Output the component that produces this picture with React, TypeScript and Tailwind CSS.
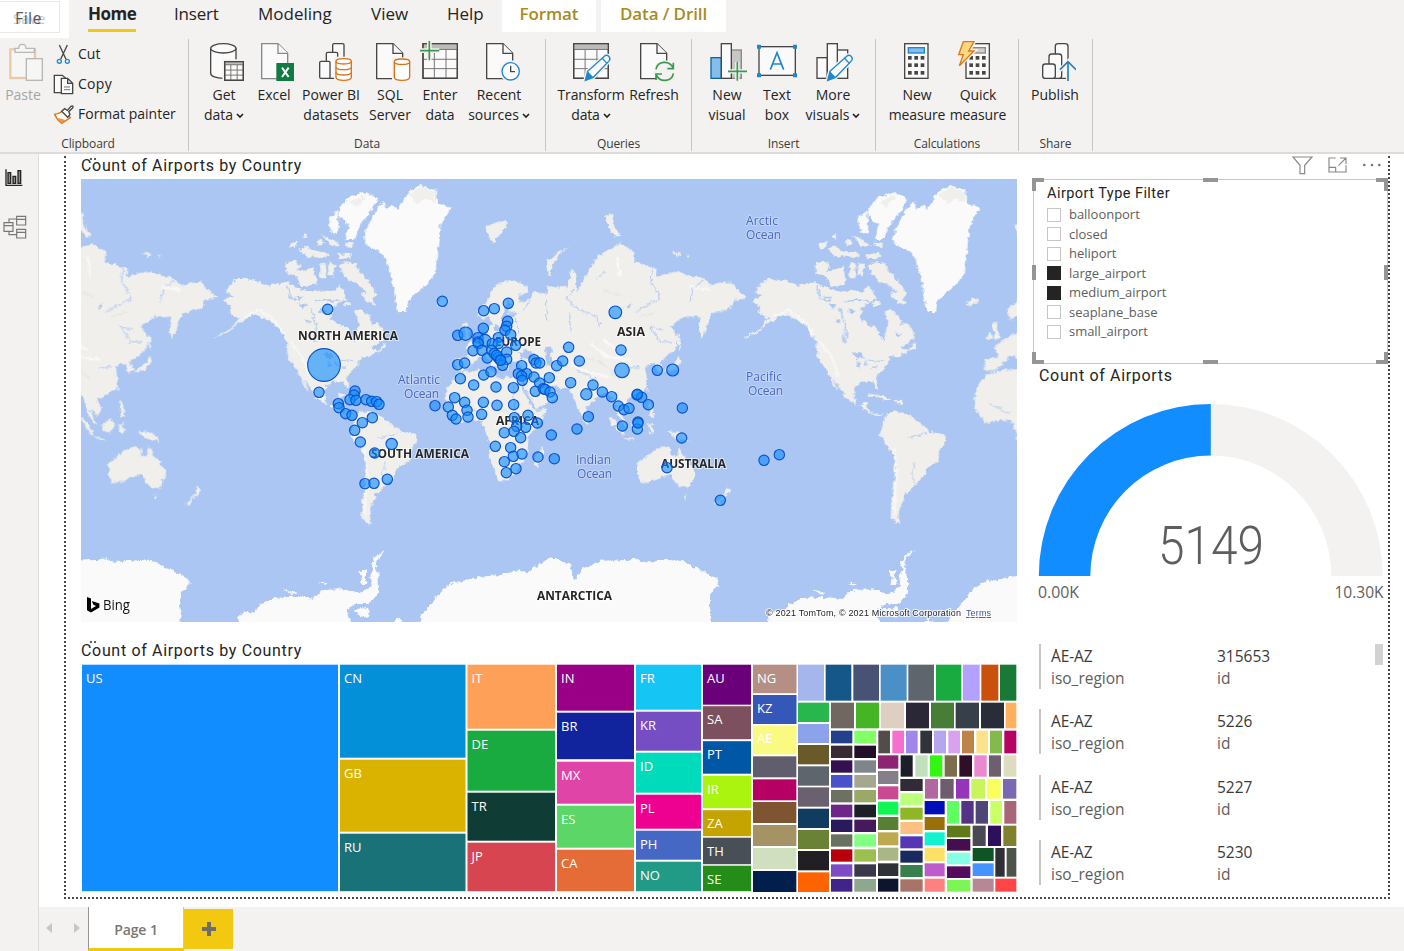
import React from "react";

const ui = "font-['Open_Sans','Noto_Sans',sans-serif]";
const din = "font-[Roboto,'Liberation_Sans',sans-serif]";

/* ---------- ribbon icons ---------- */
type IconProps = { box: string; w?: number; h?: number; children: React.ReactNode };
function Icon({ box, w = 42, h = 42, children }: IconProps) {
  return (
    <svg viewBox={box} width={w} height={h} fill="none" strokeWidth={4} className="shrink-0">
      {children}
    </svg>
  );
}

const DARK = "#484644";
const BLUE = "#1f87cc";
const GREEN = "#3c9a50";

function Doc({ x, color = DARK }: { x: number; color?: string }) {
  return (
    <g stroke={color} fill="#fafafa">
      <path d={`M${x} 131h49l29 29v76h-78z`} />
      <path d={`M${x + 49} 131v29h29`} />
    </g>
  );
}
function Grid({ x, y, w, h, color = DARK }: { x: number; y: number; w: number; h: number; color?: string }) {
  return (
    <g stroke={color}>
      <rect x={x} y={y} width={w} height={h} fill="#fafafa" />
      <rect x={x + 2} y={y + 2} width={w - 4} height={h / 7} fill="#bdbbb9" stroke="none" />
      <path
        strokeWidth={3}
        stroke="#797775"
        d={`M${x} ${y + h / 6}h${w}M${x} ${y + h * 0.45}h${w}M${x} ${y + h * 0.72}h${w}M${x + w * 0.33} ${y + h / 6}V${y + h}M${x + w * 0.67} ${y + h / 6}V${y + h}`}
      />
      <rect x={x} y={y} width={w} height={h} />
    </g>
  );
}
function Pencil({ x, y }: { x: number; y: number }) {
  return (
    <g transform={`translate(${x} ${y})`}>
      <path d="M0 76l7-27L58 3c8-6 20 4 14 14L24 67z" fill="#fafafa" stroke="#f3f2f1" strokeWidth={12} />
      <path d="M0 76l7-27L58 3c8-6 20 4 14 14L24 67z" fill="#fafafa" stroke={BLUE} />
      <path d="M0 76l7-27 17 18z" fill={BLUE} />
      <path d="M50 9l15 16" stroke={BLUE} />
    </g>
  );
}

const icons = {
  get: (
    <Icon box="609 123 126 126">
      <path d="M632 145v75c0 9 17 15 38 15s38-6 38-15v-75" fill="#fafafa" stroke={DARK} />
      <ellipse cx="670" cy="145" rx="38" ry="14" fill="#fafafa" stroke={DARK} />
      <rect x="667" y="178" width="70" height="68" fill="#f3f2f1" />
      <Grid x={674} y={185} w={56} h={56} />
    </Icon>
  ),
  excel: (
    <Icon box="759 123 126 126">
      <Doc x={785} color="#8a8886" />
      <rect x="829" y="189" width="53" height="54" fill="#107c41" />
      <path d="M846 203l20 28M866 203l-20 28" stroke="#fff" strokeWidth={6} />
    </Icon>
  ),
  pbi: (
    <Icon box="930 123 126 126">
      <g stroke={DARK} fill="#fafafa">
        <rect x="998" y="131" width="34" height="80" rx="4" />
        <rect x="979" y="157" width="34" height="78" rx="4" />
        <rect x="959" y="184" width="31" height="51" rx="4" />
      </g>
      <path d="M1002 170h60v78h-60z" fill="#f3f2f1" />
      <g stroke="#d87415" fill="#fff">
        <path d="M1008 184v48c0 5 10 9 23 9s23-4 23-9v-48" />
        <ellipse cx="1031" cy="184" rx="23" ry="8" />
        <path d="M1008 200c0 5 10 9 23 9s23-4 23-9M1008 216c0 5 10 9 23 9s23-4 23-9" />
      </g>
    </Icon>
  ),
  sql: (
    <Icon box="-3 123 126 126">
      <Doc x={20} />
      <path d="M66 172h60v76H66z" fill="#f3f2f1" />
      <g stroke="#d87415" fill="#fff">
        <path d="M73 185v46c0 6 10 10 23 10s23-4 23-10v-46" />
        <ellipse cx="96" cy="185" rx="23" ry="8" />
      </g>
    </Icon>
  ),
  enter: (
    <Icon box="147 123 126 126">
      <Grid x={159} y={131} w={103} h={104} />
      <path d="M178 123v58M150 152h58" stroke="#f3f2f1" strokeWidth={14} />
      <path d="M178 123v58M150 152h58" stroke={GREEN} strokeWidth={5} />
    </Icon>
  ),
  recent: (
    <Icon box="324 123 126 126">
      <Doc x={350} />
      <circle cx="422" cy="214" r="33" fill="#f3f2f1" />
      <circle cx="422" cy="214" r="26" fill="#fff" stroke={BLUE} />
      <path d="M422 197v18h13" stroke={DARK} />
    </Icon>
  ),
  transform: (
    <Icon box="600 123 126 126">
      <Grid x={611} y={131} w={104} h={104} />
      <Pencil x={646} y={165} />
    </Icon>
  ),
  refresh: (
    <Icon box="789 123 126 126">
      <Doc x={812} />
      <circle cx="884" cy="214" r="33" fill="#f3f2f1" />
      <g stroke={GREEN} strokeWidth={5}>
        <path d="M858 208c4-26 41-29 52-3M910 188v18h-18M910 220c-4 26-41 29-52 3M858 240v-18h18" />
      </g>
    </Icon>
  ),
  newVisual: (
    <Icon box="48 123 126 126">
      <rect x="124" y="150" width="30" height="85" fill="#c8c6c4" stroke="#8a8886" />
      <rect x="63" y="173" width="31" height="62" fill="#83beec" stroke="#1067a8" />
      <rect x="94" y="131" width="30" height="104" fill="#fafafa" stroke={DARK} />
      <path d="M142 186v56M114 214h57" stroke="#f3f2f1" strokeWidth={13} />
      <path d="M142 186v56M114 214h57" stroke={GREEN} strokeWidth={5} />
    </Icon>
  ),
  textBox: (
    <Icon box="198 123 126 126">
      <rect x="207" y="140" width="109" height="86" fill="#fafafa" stroke={DARK} />
      <path d="M201 134h12v12h-12zM309 134h12v12h-12zM201 220h12v12h-12zM309 220h12v12h-12z" fill={BLUE} />
      <path d="M241 209l20-51 20 51M248 192h26" stroke={BLUE} strokeWidth={5} />
    </Icon>
  ),
  more: (
    <Icon box="366 123 126 126">
      <g stroke={DARK} fill="#fafafa">
        <rect x="442" y="150" width="31" height="85" />
        <rect x="381" y="173" width="31" height="62" />
        <rect x="412" y="131" width="30" height="104" />
      </g>
      <Pencil x={413} y={165} />
    </Icon>
  ),
  newMeasure: (
    <Icon box="618 123 126 126">
      <rect x="644" y="131" width="70" height="104" fill="#fafafa" stroke={DARK} />
      <rect x="655" y="143" width="48" height="16" fill="#83beec" stroke={BLUE} />
      <Keys x={654} />
    </Icon>
  ),
  quick: (
    <Icon box="801 123 126 126">
      <rect x="828" y="131" width="70" height="104" fill="#fafafa" stroke={DARK} />
      <rect x="838" y="143" width="48" height="16" fill="#d2d0ce" stroke="#8a8886" />
      <Keys x={838} />
      <path d="M820 125h32l-16 28h16l-44 44 12-33h-14z" fill="#f3f2f1" stroke="#f3f2f1" strokeWidth={12} />
      <path d="M820 125h32l-16 28h16l-44 44 12-33h-14z" fill="#fbd983" stroke="#dd7a17" />
    </Icon>
  ),
  publish: (
    <Icon box="1032 123 126 126">
      <g stroke={DARK} fill="#fafafa">
        <rect x="1096" y="131" width="38" height="104" rx="8" />
        <rect x="1077" y="162" width="38" height="73" rx="8" />
        <rect x="1058" y="192" width="38" height="43" rx="8" />
      </g>
      <path d="M1134 250v-64l-24 24M1134 186l24 24" stroke="#f3f2f1" strokeWidth={13} />
      <path d="M1134 243v-57M1110 209l24-24 24 24" stroke="#2b7fb5" strokeWidth={5} />
    </Icon>
  ),
};
function Keys({ x }: { x: number }) {
  return (
    <g fill={DARK}>
      {[168, 190, 213].map((y) =>
        [0, 19, 38].map((dx) => <rect key={`${y}-${dx}`} x={x + dx} y={y} width={11} height={11} />)
      )}
    </g>
  );
}

/* ---------- ribbon ---------- */
function Chevron() {
  return (
    <svg width="8" height="6" viewBox="0 0 8 6" fill="none" stroke="#252423" strokeWidth="1.7" className="ml-[3px] inline-block align-middle">
      <path d="M1 1l3 3 3-3" />
    </svg>
  );
}
type Btn = { icon: React.ReactNode; a: string; b?: string; cls: string; menu?: boolean };
function Group({ cls, btnCls, label, btns }: { cls: string; btnCls: string; label: string; btns: Btn[] }) {
  return (
    <section className={`flex flex-col justify-between border-r border-[#c8c6c4] ${cls}`}>
      <div className={`flex pt-[2px] ${btnCls}`}>
        {btns.map((t) => (
          <button key={t.a + t.b} className={`flex shrink-0 flex-col items-center text-[14px] leading-[20px] text-[#252423] ${t.cls}`}>
            {t.icon}
            <span className="mt-[2px] whitespace-nowrap">{t.a}</span>
            <span className="whitespace-nowrap">
              {t.b}
              {t.menu && <Chevron />}
            </span>
          </button>
        ))}
      </div>
      <div className="text-center text-[12px] leading-[14px] tracking-[-0.1px] text-[#3b3a39]">{label}</div>
    </section>
  );
}

function Ribbon() {
  return (
    <div className="flex h-[122px] border-b-2 border-[#dcdbda] pt-[7px] pb-px">
      <section className="flex w-[189px] shrink-0 flex-col justify-between border-r border-[#c8c6c4]">
        <div className="flex">
          <div className="flex w-[46px] flex-col items-center pt-[2px] text-[14px] leading-[20px] text-[#a6a5a4]">
            <Icon box="6 123 126 126">
              <g opacity="0.55">
                <rect x="31" y="148" width="74" height="86" fill="#fafafa" stroke="#e3ab68" strokeWidth={7} />
                <path d="M45 157v-12h11c0-16 22-16 22 0h25v12z" fill="#fafafa" stroke="#8a8886" />
                <rect x="79" y="176" width="48" height="65" fill="#fafafa" stroke="#8a8886" />
              </g>
            </Icon>
            <span className="mt-[2px]">Paste</span>
          </div>
          <div className="flex flex-col gap-[6px] pl-[7px] pt-[3px] text-[14px] leading-6 text-[#252423]">
            <div className="flex items-center gap-[4px]">
              <Icon box="158 132 63 63" w={21} h={21}>
                <path d="M177 135l20 43M201 135l-20 43" stroke={DARK} />
                <circle cx="177" cy="184" r="6" stroke={BLUE} />
                <circle cx="201" cy="184" r="6" stroke={BLUE} />
              </Icon>
              <span>Cut</span>
            </div>
            <div className="flex items-center gap-[4px]">
              <Icon box="158 221 63 63" w={21} h={21}>
                <path d="M182 277h-20v-52h24l10 9" fill="#fafafa" stroke={DARK} />
                <path d="M183 234h19l15 15v31h-34zM202 234v15h15" fill="#fafafa" stroke={DARK} />
                <path d="M191 260h18M191 268h18" stroke="#797775" strokeWidth={3} />
              </Icon>
              <span className="tracking-[0.3px]">Copy</span>
            </div>
            <div className="flex items-center gap-[4px]">
              <Icon box="158 309 63 63" w={21} h={21}>
                <path d="M163 340c12-2 19-5 24-11l23 21-26 17c-8-6-16-14-21-27z" fill="#fff" stroke="#d87415" />
                <path d="M172 350l26 8-13 9z" fill="#f0953f" />
                <path d="M184 331l9-8 8 5 11-12c6-4 8 1 4 6l-11 10 4 8-7 9z" fill="#fff" stroke={DARK} />
              </Icon>
              <span>Format painter</span>
            </div>
          </div>
        </div>
        <div className="pr-3 text-center text-[12px] leading-[14px] tracking-[-0.1px] text-[#3b3a39]">Clipboard</div>
      </section>
      <Group
        cls="w-[357px]"
        btnCls="pl-[10px]"
        label="Data"
        btns={[
          { icon: icons.get, a: "Get", b: "data", menu: true, cls: "w-[50px]" },
          { icon: icons.excel, a: "Excel", cls: "w-[50px]" },
          { icon: icons.pbi, a: "Power BI", b: "datasets", cls: "w-[64px]" },
          { icon: icons.sql, a: "SQL", b: "Server", cls: "w-[54px]" },
          { icon: icons.enter, a: "Enter", b: "data", cls: "w-[46px]" },
          { icon: icons.recent, a: "Recent", b: "sources", menu: true, cls: "w-[72px]" },
        ]}
      />
      <Group
        cls="w-[146px]"
        btnCls="pl-[10px]"
        label="Queries"
        btns={[
          { icon: icons.transform, a: "Transform", b: "data", menu: true, cls: "w-[70px] tracking-[-0.15px]" },
          { icon: icons.refresh, a: "Refresh", cls: "w-[56px] tracking-[-0.1px]" },
        ]}
      />
      <Group
        cls="w-[184px]"
        btnCls="pl-[12px]"
        label="Insert"
        btns={[
          { icon: icons.newVisual, a: "New", b: "visual", cls: "w-[46px]" },
          { icon: icons.textBox, a: "Text", b: "box", cls: "w-[54px]" },
          { icon: icons.more, a: "More", b: "visuals", menu: true, cls: "w-[58px]" },
        ]}
      />
      <Group
        cls="w-[143px]"
        btnCls="pl-[11px]"
        label="Calculations"
        btns={[
          { icon: icons.newMeasure, a: "New", b: "measure", cls: "w-[60px] tracking-[-0.15px]" },
          { icon: icons.quick, a: "Quick", b: "measure", cls: "w-[62px] tracking-[-0.15px]" },
        ]}
      />
      <Group cls="w-[74px]" btnCls="pl-[10px]" label="Share" btns={[{ icon: icons.publish, a: "Publish", cls: "w-[52px]" }]} />
    </div>
  );
}

function Tabs() {
  return (
    <nav className="relative flex h-[32px] items-start text-[17px] leading-[28px] text-[#252423]">
      <div className="absolute left-0 top-0 z-10 h-[38px] w-[69px] bg-white">
        <div className="relative mt-px h-[32px] w-[60px] border border-l-0 border-[#e8e7e6] text-[16px] leading-[32px] text-[#5a5957]">
          <span className="absolute left-[13px] text-[15px] text-[#c9c8c7]">Save</span>
          <span className="absolute left-[15px] tracking-[0.4px]">File</span>
        </div>
      </div>
      <div className="ml-[88px] h-[32px] w-[48px] whitespace-nowrap border-b-[3px] border-[#f2c811] font-bold tracking-[-0.5px]">Home</div>
      <div className="ml-[38px] w-[46px] tracking-[-0.2px]">Insert</div>
      <div className="ml-[38px] w-[75px]">Modeling</div>
      <div className="ml-[38px] w-[38px]">View</div>
      <div className="ml-[38px] w-[37px]">Help</div>
      <div className="ml-[18px] h-[32px] w-[94px] bg-white text-center font-semibold tracking-[-0.1px] text-[#a88c1e]">Format</div>
      <div className="ml-[5px] h-[32px] w-[125px] bg-white text-center font-semibold tracking-[-0.1px] text-[#a88c1e]">Data / Drill</div>
    </nav>
  );
}

/* ---------- world map ---------- */
const LAND = "#f0efeb";
const ICE = "#fafafa";
const SEA = "#abc6f2";
const PERIOD = 529.4;

function World() {
  return (
    <g>
      {/* the Americas */}
      <g transform="translate(10.6 175) scale(0.33333)">
        <g fill={LAND}>
          <path d="M645 350L665 322 690 310 740 318 775 332 800 325 830 322 865 342 900 350 940 346 972 350 985 330 1000 352 1008 372 985 383 965 400 960 430 985 450 1010 458 1020 485 1030 500 1038 470 1045 450 1033 410 1050 403 1075 420 1085 450 1100 440 1118 465 1122 490 1105 508 1080 518 1105 528 1080 542 1052 545 1040 570 1028 585 1008 608 1015 640 1008 640 998 620 960 620 945 635 943 665 950 690 965 690 975 680 985 684 977 695 990 705 998 718 1012 715 1030 720 1022 724 1003 722 985 712 965 697 940 686 915 665 905 645 880 612 888 635 895 650 882 635 868 600 850 575 832 545 828 500 815 478 795 450 750 425 720 420 700 435 685 445 650 475 605 492 660 462 685 430 652 412 662 398 640 375 668 365Z" />
          <path d="M825 265l28-10 17 20-22 25-20-5zM850 295l25-10 35-8 8 50-45 10zM985 270l20-8 30 5 10 20 18 20 38 50-15 18 10 15-25-8-20-25 20-5-30-25-28-10-18-20zM840 205l25-6-15 22-14-2zM865 225l20-15 25 25-15 15zM915 200l18-8 8 14-18 6zM980 238l40-5v16l-38 4zM930 265l16 0v45l-18 0zM955 262l20 5-8 38-14-8zM905 228l50 5 0 12-45 0zM875 185l12-8 2 15zM935 180l35 15 20 18-25 2zM1005 200l22 2 0 14-24-2zM995 385l22-8 5 15-15 2z" />
          <path d="M985 655l40 8 30 12-20 0-30-10-22 0zM1062 676l30 2-5 8-25-2zM1100 530l25-30 0 20z" />
          <path d="M1040 715L1065 710 1100 717 1130 735 1150 755 1175 770 1215 780 1220 795 1200 825 1195 860 1165 875 1145 910 1120 937 1110 950 1095 955 1092 975 1080 995 1075 1025 1082 1047 1068 1044 1052 1030 1055 975 1062 935 1066 875 1063 842 1045 820 1030 800 1018 775 1028 750Z" />
          <path d="M1278 382l18-16 17 6-2 12-22 11z" />
        </g>
        <g fill={ICE}>
          <path d="M1058 185L1088 120 1110 90 1122 80 1128 102 1150 92 1162 105 1190 55 1230 30 1275 45 1280 85 1320 100 1300 130 1288 160 1284 200 1280 240 1275 290 1255 320 1230 345 1205 365 1192 380 1188 410 1162 412 1152 360 1140 300 1125 250 1100 225 1066 210Z" />
          <path d="M980 110L1010 70 1060 50 1102 70 1082 110 1055 140 1040 170 1030 195 1005 195 1015 150 990 130zM952 130l28-20 6 62-22 5z" />
        </g>
        <path d="M1195 60l40-28 38 20 0 30-30-12-20 18zM1020 80l35-18 10 10-30 25z" fill={LAND} />
        <path d="M935 535l28 0 10 15-20 0zM955 552l5 25-8 0zM972 555l12 15-8 2zM990 578l20-6-2 6zM865 385l25 4-15 12zM885 430l18 12-15 0zM910 470l8 30-8 0zM850 365l30 0-10 10zM930 400l20 10-25 5zM1065 470l20 10-10 5z" fill={SEA} />
        <path d="M985 380l-30-5-40 5M830 330l10 40 30 10M900 400l15 50 5 40" fill="none" stroke={SEA} strokeWidth="4" />
        <path d="M700 425l45-20 45 30 30 45M840 500l35 45 20 60M1063 820l5 80-5 120" fill="none" stroke="#fafafa" strokeWidth="7" opacity="0.8" />
        <path d="M1100 790l60-15M1125 925l-12-30 10-15 0-20M1030 560l-45-5" fill="none" stroke={SEA} strokeWidth="2.5" />
      </g>
      {/* Europe, Africa, Asia, Oceania */}
      <g transform="translate(430 280) scale(0.33333)">
        <g fill={LAND}>
          <path d="M79 235L117 233 105 200 135 178 172 158 178 138 188 128 196 150 215 150 200 135 186 130 178 108 160 116 144 108 142 88 172 68 185 30 215 5 245 0 292 18 295 38 262 48 275 66 300 58 312 35 350 42 352 20 400 18 412 25 425-35 438-10 440 38 475-25 505-75 570-110 615-85 612-55 680-35 678-10 735-25 820-5 840 15 900 5 950 55 912 60 905 85 845 100 835 130 815 175 805 145 812 112 770 108 748 118 722 140 745 175 738 205 705 235 688 245 700 272 682 278 674 248 645 262 650 290 652 320 628 340 600 352 590 360 604 385 590 405 575 395 568 388 585 425 592 440 578 430 563 400 555 370 545 350 522 338 510 342 485 368 470 378 462 410 453 410 443 385 432 350 418 328 375 318 350 315 332 300 318 295 342 325 362 318 385 340 370 362 318 388 306 362 278 305 274 325 300 368 316 392 350 385 345 402 320 440 296 470 293 512 285 540 270 550 262 575 235 600 205 605 190 560 175 520 178 490 165 450 160 428 130 418 80 430 50 395 45 370 48 340 62 305 85 280 150 268 188 268 196 285 218 298 230 290 280 300 300 290 300 268 270 262 262 240 240 244 235 272 222 255 205 228 188 225 212 262 190 262 165 225 140 238 120 260 100 274 76 270Z" />
          <path d="M82 165l14-8 2 18-16 5zM98 130l12-6 0 14 12 35-22 8 6-25z" />
          <path d="M315 535l22-35 3 20-15 40-13-5zM463 412l10 4 0 14-8 2z" />
          <path d="M538 410l20 15 25 40-10 0-30-40zM580 470l33 6 0 5-30-5zM603 435l25-17 15 12-10 26-20 0zM655 365l12 4 6 44-12-6zM655 430l20 0-12 8 10 15-12 6-6-22zM710 455l28 0 25 10 18 22-28-9-25-8z" />
          <path d="M623 550L668 515 690 503 703 498 720 506 722 525 740 532 746 500 758 525 773 540 793 570 793 590 778 622 753 622 733 605 723 585 698 590 663 605 630 607 625 580zM760 645h10l-4 14zM890 620l14 8-10 14-10 4-16 28-14-2 24-22z" />
          <path d="M742 160l10 18-2 35-6-20zM745 228l8 20-20 22-36 8 20-18 20-12zM648 330l5-8 2 12z" />
          <path d="M352-15l3-40 25-25 40-20-30 22-25 32-3 33z" />
          <path d="M165-165l65-15 0 15-40 55-15-20z M525-195l20-5 10 45 20 20-20 5-20-30zM725-83l28 3-10 13zM768-76l14 4-8 6z" />
        </g>
        <path d="M205 160l8-35 8-30 15-35 8 12-10 28 36-4-22 14-8 24-8 26-12 2zM266 222l22-14 30 18-5 12-42-2zM345 205l20-6-4 22 8 32-18 2zM395 200l12-2 0 8zM590 80l15-10-8 20z" fill={SEA} />
        <path d="M430 25l-20 35 40 30 50 20 10 30M668-35l-5 40 30 50-60 30-15 12M500-5l25-20M820 0l-30 25-10 40M300 60l-20 30M250 100l20 60M700 150l-40-10 30 45 35 0M630 260l-40 5M500 300l-60-30M420 100l0 55M250 320l5 80M90 370l60 30M350 60l0 60" fill="none" stroke={SEA} strokeWidth="3" />
        <path d="M480 190l50 40 70 10M420 250l60 30 60 10M560-70l10 60M780 20l60 10M520 180l40 30" fill="none" stroke="#fbfbfa" strokeWidth="8" opacity="0.8" />
        <path d="M460 230l60 20 50 50M630 110l50-15M200 380l40 20M520 30l60 20M280 330l30 30" fill="none" stroke="#e2e1dc" strokeWidth="4" opacity="0.7" />
      </g>
      {/* Antarctica */}
      <g transform="translate(80 400) scale(0.33333)" fill={ICE}>
        <path d="M475 675L478 642 500 635 520 638 540 612 580 594 640 590 700 596 728 570 790 568 830 580 852 575 876 558 868 530 880 510 874 492 890 465 915 450 885 488 896 530 896 580 866 612 830 612 800 630 812 675zM820 628l45-5 0 30-25-4zM610 568l40 12-15 4zM715 550l28-2-6 6zM836 515l25-8-6 25 8 20-20 0 4-18z" />
        <path d="M940 675L955 652 975 675zM1010 675L1030 640 1080 580 1122 543 1140 545 1200 530 1260 525 1318 510 1340 520 1410 472 1470 492 1482 540 1510 505 1560 482 1640 480 1665 475 1690 486 1770 480 1810 484 1870 515 1918 540 1915 558 1890 580 1890 675Z" />
      </g>
    </g>
  );
}

const bubbles: [number, number, number?][] = [
  [37, 63], [161, 91], [193, 85], [235, 69], [160, 144], [233, 123], [230, 138], [225, 150], [242, 163], [83, 165], [107, 160, 20],
  [144, 172], [144, 185], [165, 180, 18], [145, 190], [129, 211], [156, 210], [205, 172], [187, 190], [205, 190], [257, 195],
  [185, 210], [230, 215], [172, 233], [193, 220], [205, 232], [230, 237], [210, 238], [218, 255], [200, 225], [212, 240], [83, 253],
  [104, 248], [91, 295], [131, 314], [161, 284], [183, 274], [198, 320], [250, 322], [275, 256], [265, 280], [290, 280], [275, 287],
  [277, 300], [312, 238], [318, 248], [329, 248], [312, 290], [329, 308], [358, 292], [316, 333], [340, 325], [345, 327], [360, 335],
  [367, 352], [380, 256], [398, 242], [416, 201], [448, 242], [422, 307], [489, 314], [469, 342, 17], [517, 335], [545, 349],
  [475, 409], [441, 446], [565, 377], [582, 388], [597, 384], [621, 344], [635, 351], [622, 342], [655, 373], [577, 437], [624, 425],
  [622, 446], [624, 428], [682, 270], [728, 269, 18], [576, 270, 22], [573, 209], [556, 96, 19], [757, 383], [755, 473], [711, 562],
  [364, 464], [373, 535], [324, 530], [15, 376], [55, 380], [74, 352], [104, 366], [111, 390], [67, 405], [78, 416], [114, 410],
  [155, 402], [160, 366], [201, 375], [251, 373], [294, 405], [253, 412], [322, 428], [287, 441], [260, 438], [223, 457], [252, 453],
  [272, 472], [196, 498], [242, 502], [250, 528], [276, 521], [223, 544], [258, 565], [229, 577], [871, 660], [1002, 540], [1048, 523],
  [-307, 87], [-318, 254, 49], [-333, 336], [-225, 332], [-228, 344], [-240, 358], [-222, 360], [-275, 370], [-273, 382], [-253, 400],
  [-234, 405], [-192, 358], [-175, 363], [-160, 364], [-153, 372], [-203, 427], [-173, 412], [-226, 450], [-209, 485], [-115, 491, 17],
  [-166, 518], [-195, 610], [-168, 609], [-128, 597],
];

const continents: [string, number, number, number][] = [
  ["NORTH AMERICA", 298, 340, 100], ["EUROPE", 495, 346, 46], ["ASIA", 617, 336, 28], ["AFRICA", 496, 425, 43],
  ["SOUTH AMERICA", 371, 458, 98], ["AUSTRALIA", 661, 468, 65], ["ANTARCTICA", 537, 600, 75],
];
const oceans: [string, number, number, number][] = [
  ["Arctic", 746, 225, 32], ["Ocean", 746, 239, 35], ["Atlantic", 398, 384, 42], ["Ocean", 404, 398, 35],
  ["Pacific", 746, 381, 36], ["Ocean", 748, 395, 35], ["Indian", 576, 464, 35], ["Ocean", 577, 478, 35],
];

function MapVisual() {
  return (
    <svg width="936" height="443" viewBox="81 179 936 443" className={`block ${ui}`}>
      <defs>
        <filter id="coast" x="81" y="179" width="936" height="443" filterUnits="userSpaceOnUse">
          <feTurbulence type="fractalNoise" baseFrequency="0.22" numOctaves="3" seed="4" result="n" />
          <feDisplacementMap in="SourceGraphic" in2="n" scale="5.5" xChannelSelector="R" yChannelSelector="G" />
        </filter>
      </defs>
      <rect x="81" y="179" width="936" height="443" fill={SEA} />
      <g filter="url(#coast)">
        {[-PERIOD, 0, PERIOD].map((dx) => (
          <g key={dx} transform={`translate(${dx} 0)`}>
            <World />
          </g>
        ))}
      </g>
      <g fontSize="12" fill="#4a67c4" stroke="#c3d5f6" strokeWidth="2" paintOrder="stroke">
        {oceans.map(([t, x, y, w]) => (
          <text key={t + x + y} x={x} y={y} textLength={w}>{t}</text>
        ))}
      </g>
      <g fontSize="12" fontWeight="700" fill="#262626" stroke="#ffffff" strokeOpacity="0.55" strokeWidth="2" paintOrder="stroke">
        {continents.map(([t, x, y, w]) => (
          <text key={t} x={x} y={y} textLength={w} lengthAdjust="spacingAndGlyphs">{t}</text>
        ))}
      </g>
      <g transform="translate(430 280) scale(0.33333)" fill="#118dff" fillOpacity="0.62" stroke="#0a52cc" strokeWidth="3.4">
        {bubbles.map(([x, y, r], i) => (
          <circle key={i} cx={x} cy={y + 1} r={r ?? 15.5} />
        ))}
      </g>
      <path d="M87 597l4 1.4v10.5l5-2.9-2.6-1.2-1.6-3.9 7.6 2.7v3.8l-8.4 5.2-4-2.3z" fill="#000" />
      <text x="103" y="610" fontSize="14" fill="#111" textLength="27" lengthAdjust="spacingAndGlyphs">Bing</text>
      <g fontSize="9" style={{ fontFamily: "'Liberation Sans', Arial, sans-serif" }} stroke="#ffffff" strokeOpacity="0.8" strokeWidth="2" paintOrder="stroke">
        <text x="766" y="616" fill="#222" textLength="195">© 2021 TomTom, © 2021 Microsoft Corporation</text>
        <text x="966" y="616" fill="#3a55a8" textLength="25" textDecoration="underline">Terms</text>
      </g>
    </svg>
  );
}

/* ---------- treemap ---------- */
const named: [string, number, number, number, number, string][] = [
  ["US", 82, 665, 256, 226.5, "#118dff"],
  ["CN", 340, 665, 125.5, 93, "#0490d9"], ["GB", 340, 760, 125.5, 72, "#d9b300"], ["RU", 340, 834, 125.5, 57.5, "#197278"],
  ["IT", 467.5, 665, 87.5, 64, "#ffa058"], ["DE", 467.5, 731, 87.5, 60, "#1aab40"], ["TR", 467.5, 793, 87.5, 48, "#0f3d36"], ["JP", 467.5, 843, 87.5, 48.5, "#d64550"],
  ["IN", 557, 665, 77, 46, "#990085"], ["BR", 557, 713, 77, 46.5, "#12239e"], ["MX", 557, 762, 77, 42, "#e044a7"], ["ES", 557, 806, 77, 42, "#5bd667"], ["CA", 557, 850, 77, 41.5, "#e66c37"],
  ["FR", 636, 665, 65, 45, "#15c6f4"], ["KR", 636, 712, 65, 39, "#744ec2"], ["ID", 636, 753, 65, 40, "#00dbbc"], ["PL", 636, 795, 65, 34, "#ee0091"], ["PH", 636, 831, 65, 29, "#4668c5"], ["NO", 636, 862, 65, 29.5, "#219b85"],
  ["AU", 703, 665, 48, 40, "#6b007b"], ["SA", 703, 706.5, 48, 33, "#7c505e"], ["PT", 703, 741.5, 48, 32.5, "#0057a5"], ["IR", 703, 776, 48, 32.5, "#aaf410"], ["ZA", 703, 810.5, 48, 26, "#c5a300"], ["TH", 703, 838, 48, 26.5, "#484f57"], ["SE", 703, 866, 48, 25.5, "#268c19"],
  ["NG", 753, 665, 43.5, 28.5, "#b68f84"], ["KZ", 753, 695.3, 43.5, 29, "#3557b7"], ["AE", 753, 725.7, 43.5, 29, "#fafa82"],
];
/* unlabeled tiles: columns share x and width, rows share y and height */
type Strip = { dir: "col" | "row"; at: number; size: number; tiles: [number, number, string][] };
const strips: Strip[] = [
  { dir: "col", at: 24, size: 130, tiles: [[304, 367, "#605d6d"], [373, 436, "#b60064"], [441, 504, "#7e5530"], [510, 573, "#a69365"], [579, 642, "#d0dfc0"], [648, 711, "#001f4d"]] },
  { dir: "row", at: 29, size: 108, tiles: [[159, 237, "#a5b6ec"], [242, 319, "#16578a"], [325, 402, "#475275"], [407, 485, "#4a90c6"], [490, 567, "#5f656d"], [573, 649, "#1aab40"], [654, 704, "#b3a0ff"], [709, 760, "#c9500d"], [765, 814, "#197a37"]] },
  { dir: "col", at: 159, size: 93, tiles: [[143, 201, "#27b74c"], [207, 264, "#8ca2eb"], [270, 328, "#6a5a2a"], [334, 392, "#5f656d"], [397, 455, "#69616f"], [461, 519, "#103c5f"], [525, 582, "#698236"], [588, 646, "#211e24"], [652, 711, "#ff6400"]] },
  { dir: "row", at: 143, size: 77, tiles: [[258, 327, "#706760"], [333, 402, "#45b425"], [408, 477, "#dfcfc0"], [483, 552, "#2a2837"], [558, 627, "#477d37"], [632, 702, "#37404a"], [708, 777, "#282d37"], [782, 814, "#ffb160"]] },
  { dir: "col", at: 258, size: 64, tiles: [[227, 265, "#25408a"], [272, 309, "#382a35"], [316, 353, "#33104f"], [360, 398, "#4a52c9"], [405, 442, "#6e7162"], [449, 487, "#6e268a"], [494, 531, "#291a5d"], [538, 575, "#68725f"], [583, 620, "#b9000d"], [628, 665, "#7e4bc6"], [672, 710, "#402589"]] },
  { dir: "col", at: 328, size: 65, tiles: [[227, 265, "#82ff64"], [272, 309, "#240f2b"], [316, 353, "#7e858b"], [360, 398, "#a5a78f"], [405, 442, "#9aa868"], [449, 487, "#1c1f28"], [494, 531, "#46195c"], [538, 575, "#82ff82"], [583, 620, "#9bc04f"], [628, 665, "#3b384b"], [672, 710, "#8fa78f"]] },
  { dir: "row", at: 227, size: 68, tiles: [[400, 435, "#524e47"], [442, 477, "#f56fcd"], [483, 518, "#a087ec"], [526, 561, "#303338"], [567, 603, "#b6a6ee"], [610, 645, "#d8a3ee"], [651, 687, "#bd834a"], [694, 729, "#fce28a"], [735, 771, "#84b94b"], [778, 814, "#b60064"]] },
  { dir: "col", at: 399, size: 61, tiles: [[301, 341, "#8b2472"], [348, 387, "#848089"], [394, 433, "#ca4a92"], [440, 479, "#12f655"], [486, 525, "#587f33"], [532, 571, "#bda94f"], [578, 617, "#abb686"], [625, 663, "#2e3136"], [671, 710, "#0e142c"]] },
  { dir: "row", at: 301, size: 64, tiles: [[467, 503, "#1c1f28"], [511, 548, "#c0e0be"], [555, 592, "#33f712"], [599, 636, "#7c6e4d"], [643, 681, "#2e0f27"], [688, 725, "#ea88d0"], [732, 768, "#6e5f6e"], [776, 814, "#dddcc0"]] },
  { dir: "col", at: 466, size: 67, tiles: [[372, 408, "#302b36"], [415, 451, "#bcff7c"], [458, 494, "#90b628"], [501, 537, "#fcc083"], [544, 580, "#5536b7"], [587, 623, "#1a2a5e"], [630, 666, "#38804c"], [673, 710, "#a77568"]] },
  { dir: "row", at: 372, size: 59, tiles: [[540, 579, "#b1679f"], [586, 626, "#6d5d6d"], [633, 673, "#9635ba"], [679, 720, "#c8f55b"], [726, 767, "#faff5c"], [774, 814, "#7a68b0"]] },
  { dir: "col", at: 539, size: 60, tiles: [[438, 478, "#000db8"], [486, 525, "#9a700c"], [532, 571, "#12f2ce"], [578, 618, "#ffe066"], [625, 664, "#bd5cca"], [671, 710, "#ff8080"]] },
  { dir: "row", at: 438, size: 68, tiles: [[606, 642, "#5fff64"], [649, 686, "#553285"], [692, 729, "#4e4775"], [736, 771, "#caff66"], [778, 814, "#a76779"]] },
  { dir: "col", at: 606, size: 70, tiles: [[512, 547, "#5f7a18"], [552, 587, "#430f4e"], [593, 628, "#86ffe4"], [634, 669, "#540d5d"], [675, 710, "#7df557"]] },
  { dir: "row", at: 512, size: 61, tiles: [[683, 722, "#4a4852"], [729, 768, "#2e0f5c"], [775, 814, "#80802f"]] },
  { dir: "col", at: 683, size: 63, tiles: [[579, 618, "#0e5424"], [625, 663, "#4593ff"], [671, 710, "#b88795"]] },
  { dir: "row", at: 579, size: 86, tiles: [[751, 779, "#302f36"], [785, 814, "#4d544a"]] },
  { dir: "row", at: 671, size: 39, tiles: [[751, 814, "#ff4545"]] },
];

function Treemap() {
  return (
    <svg width="937" height="229" viewBox="81 664 937 229" className={`block ${ui}`}>
      {named.map(([t, x, y, w, h, c]) => (
        <g key={t}>
          <rect x={x} y={y - 0.3} width={w} height={h} fill={c} />
          <text x={x + 4} y={y + 17.5} fontSize="13" fill="#fff">{t}</text>
        </g>
      ))}
      <g transform="translate(745 655) scale(0.33333)">
        {strips.map((s, i) =>
          s.tiles.map(([a, b, c]) =>
            s.dir === "col" ? (
              <rect key={`${i}-${a}`} x={s.at} y={a} width={s.size} height={b - a} fill={c} />
            ) : (
              <rect key={`${i}-${a}`} x={a} y={s.at} width={b - a} height={s.size} fill={c} />
            )
          )
        )}
      </g>
    </svg>
  );
}

function Title({ children, dots = false, cls = "" }: { children: string; dots?: boolean; cls?: string }) {
  return (
    <h2 className={`relative whitespace-nowrap text-[16px] tracking-[0.67px] text-[#252423] ${din} ${cls}`}>
      {dots && (
        <span className="absolute left-[9px] top-[2px] flex gap-[2px]">
          <i className="size-[2px] bg-[#605e5c]" />
          <i className="size-[2px] bg-[#605e5c]" />
        </span>
      )}
      {children}
    </h2>
  );
}

/* ---------- slicer ---------- */
const airportTypes: [string, boolean][] = [
  ["balloonport", false], ["closed", false], ["heliport", false], ["large_airport", true],
  ["medium_airport", true], ["seaplane_base", false], ["small_airport", false],
];

function Slicer() {
  return (
    <div className="relative h-[185px] w-[355px] border border-[#c8c6c4] pl-[13px] pt-[4px]">
      <svg width="358" height="188" viewBox="0 0 358 188" fill="#979593" className="absolute -left-[3px] -top-[3px]">
        <path d="M1 1h12v4H5v9H1zM357 1h-12v4h8v9h4zM1 187v-12h4v8h8v4zM357 187v-12h-4v8h-8v4zM172 1h15v4h-15zM172 183h15v4h-15zM1 88h4v15H1zM353 88h4v15h-4z" />
      </svg>
      <h3 className={`text-[14.5px] leading-[20px] tracking-[0.45px] text-[#252423] ${din}`}>Airport Type Filter</h3>
      <ul className="mt-px">
        {airportTypes.map(([t, on]) => (
          <li key={t} className="flex h-[19.5px] items-center gap-[8px] text-[13px] tracking-[-0.03px] text-[#605e5c]">
            <span className={`size-[14px] border ${on ? "border-[#252423] bg-[#252423]" : "border-[#c8c6c4] bg-white"}`} />
            {t}
          </li>
        ))}
      </ul>
    </div>
  );
}

function Gauge() {
  return (
    <svg width="352" height="218" viewBox="1036 388 352 218" className={`block ${ui}`}>
      <path d="M1038.8 576a172 172 0 0 1 344 0h-51.5a120.5 120.5 0 0 0-241 0z" fill="#f3f2f1" />
      <path d="M1038.8 576a172 172 0 0 1 172-172v51.5a120.5 120.5 0 0 0-120.5 120.5z" fill="#118dff" />
      <text x="1158" y="563.5" fontSize="53" fontWeight="300" fill="#605e5c" textLength="106" lengthAdjust="spacingAndGlyphs" style={{ fontFamily: "Roboto, sans-serif" }}>
        5149
      </text>
      <g fontSize="15.5" fill="#605e5c">
        <text x="1038" y="598" textLength="41" lengthAdjust="spacingAndGlyphs">0.00K</text>
        <text x="1334.5" y="598" textLength="49" lengthAdjust="spacingAndGlyphs">10.30K</text>
      </g>
    </svg>
  );
}

function Cards() {
  return (
    <div className="relative mt-[38px] flex flex-col gap-[20.4px] pl-[6px]">
      <span className="absolute left-[342px] top-0 h-[21px] w-[8px] bg-[#d2d2d2]" />
      <span className="absolute left-[22px] top-[5px] size-[2px] bg-[#605e5c]" />
      {["315653", "5226", "5227", "5230"].map((id) => (
        <div key={id} className="grid h-[45px] grid-cols-[166px_120px] border-l-2 border-[#c8c6c4] pl-[10px] pt-px text-[15.5px] leading-[22px]">
          <span className="tracking-[-0.1px] text-[#3b3a39]">AE-AZ</span>
          <span className="text-[#3b3a39]">{id}</span>
          <span className="text-[#605e5c]">iso_region</span>
          <span className="text-[#605e5c]">id</span>
        </div>
      ))}
    </div>
  );
}

export default function App() {
  return (
    <div className={`flex h-[951px] w-[1404px] flex-col overflow-hidden bg-white ${ui}`}>
      <header className="h-[154px] shrink-0 bg-[#f3f2f1]">
        <Tabs />
        <Ribbon />
      </header>
      <div className="flex min-h-0 flex-1">
        <aside className="flex w-[39px] shrink-0 flex-col border-r border-[#dcdbda] bg-[#f3f2f1] pl-[3px] pt-[14px]">
          <svg width="24" height="20" viewBox="11 54 72 60" fill="none" stroke="#252423" strokeWidth="4">
            <path d="M20 58v48h49" />
            <path d="M26 68h8v32h-8zM41 79h8v21h-8zM56 62h8v38h-8z" fill="#8a8886" />
          </svg>
          <svg width="24" height="24" viewBox="8 196 72 72" fill="none" stroke="#797775" strokeWidth="3.5" className="mt-[27px]">
            <path d="M49 200h27v26H49zM49 209h27M49 239h27v26H49zM49 248h27M11 219h27v26H11zM11 228h27M26 219v-11h23M26 245v10h23" />
          </svg>
        </aside>
        <div className="flex min-w-0 flex-1 flex-col">
          <div className="flex h-[753px]">
            <div className="ml-[25px] mt-[2px] flex h-[743px] w-[1326px] border-x-2 border-b-2 border-dotted border-[#484644] pl-[15px]">
              <div className="w-[937px] shrink-0">
                <Title dots cls="h-[23px] leading-[20px]">Count of Airports by Country</Title>
                <MapVisual />
                <Title dots cls="mt-[17px] h-[25px] leading-[23px]">Count of Airports by Country</Title>
                <Treemap />
              </div>
              <div className="ml-[15px] w-[356px] shrink-0">
                <div className="flex h-[23px] justify-end gap-[14px] pr-[7px]">
                  <svg width="22" height="20" viewBox="815 20 66 60" fill="none" stroke="#8a8886" strokeWidth="3.5">
                    <path d="M818 23h57l-22 25v25h-14V48z" />
                  </svg>
                  <svg width="20" height="20" viewBox="922 18 60 60" fill="none" stroke="#8a8886" strokeWidth="3.5">
                    <path d="M945 24h-20v42h51V46M958 24h18v18M976 24l-22 22M925 52h20v14" />
                  </svg>
                  <svg width="20" height="20" viewBox="1027 15 60 60" fill="#797775">
                    <circle cx="1034" cy="42" r="4" />
                    <circle cx="1057" cy="42" r="4" />
                    <circle cx="1079" cy="42" r="4" />
                  </svg>
                </div>
                <Slicer />
                <Title cls="h-[24px] pl-[6px] leading-[24px]">Count of Airports</Title>
                <div className="pl-[3px]">
                  <Gauge />
                </div>
                <Cards />
              </div>
            </div>
          </div>
          <footer className="flex h-[44px] bg-[#f3f2f1]">
            <div className="flex w-[49px] justify-between py-[15px] pl-[7px] pr-[8px]">
              <svg width="6" height="12" viewBox="0 0 6 12" fill="#c8c6c4"><path d="M6 1v10L0 6z" /></svg>
              <svg width="6" height="12" viewBox="0 0 6 12" fill="#c8c6c4"><path d="M0 1v10l6-5z" /></svg>
            </div>
            <div className="h-[44px] w-[96px] border-b-[3px] border-l border-r border-b-[#f2c811] border-l-[#979593] border-r-[#c8c6c4] bg-white text-center text-[14px] font-semibold leading-[45px] tracking-[-0.1px] text-[#797775]">
              Page 1
            </div>
            <div className="mt-[2px] flex h-[40px] w-[49px] items-center justify-center bg-[#f2c811]">
              <svg width="14" height="14" viewBox="0 0 14 14" fill="#6f6d68"><path d="M5 0h4v5h5v4H9v5H5V9H0V5h5z" /></svg>
            </div>
          </footer>
        </div>
      </div>
    </div>
  );
}
